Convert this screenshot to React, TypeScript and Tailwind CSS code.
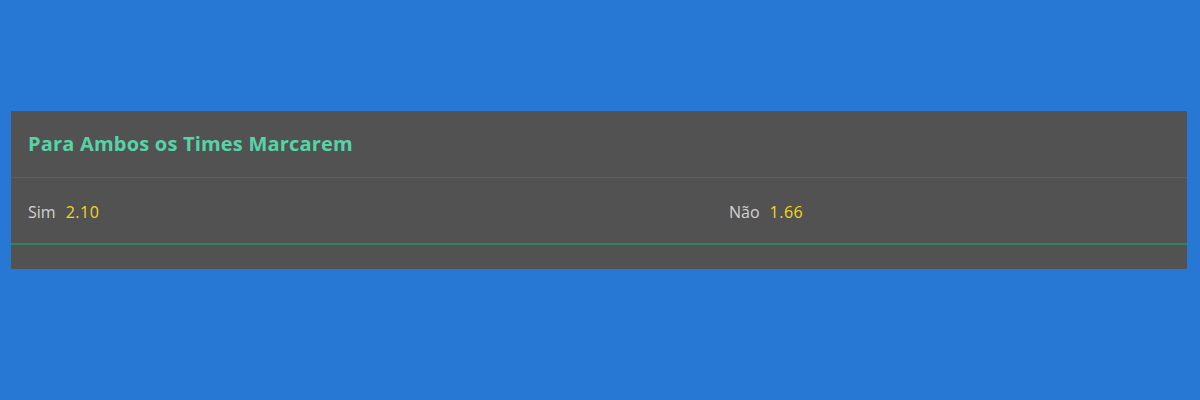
const odds = [
  { label: "Sim", price: "2.10" },
  { label: "Não", price: "1.66" },
];

export default function App() {
  return (
    <div className="min-h-[400px] w-full bg-[#2778d4] pt-[111px] pl-[11px] pr-[13px] font-['Open_Sans','Noto_Sans',sans-serif]">
      <div className="bg-[#525252]">
        {/* Header */}
        <div className="h-[67px] flex items-center px-[17px] border-b border-[#5e5e5e]">
          <h2 className="text-[20px] font-bold tracking-[0.2px] text-[#56d4a8]">Para Ambos os Times Marcarem</h2>
        </div>

        {/* Selections */}
        <div className="h-[67px] flex items-center pt-[2px] border-b-2 border-[#2e8660]">
          {odds.map((o, i) => (
            <div key={o.label} className={`flex items-center gap-[10px] pl-[17px] ${i === 0 ? "w-[701px]" : "flex-1"}`}>
              <span className="text-[16px] text-[#d2d2d2]">{o.label}</span>
              <span className="text-[16px] tracking-[0.5px] text-[#f2d91c]">{o.price}</span>
            </div>
          ))}
        </div>

        <div className="h-[24px]" />
      </div>
    </div>
  );
}
